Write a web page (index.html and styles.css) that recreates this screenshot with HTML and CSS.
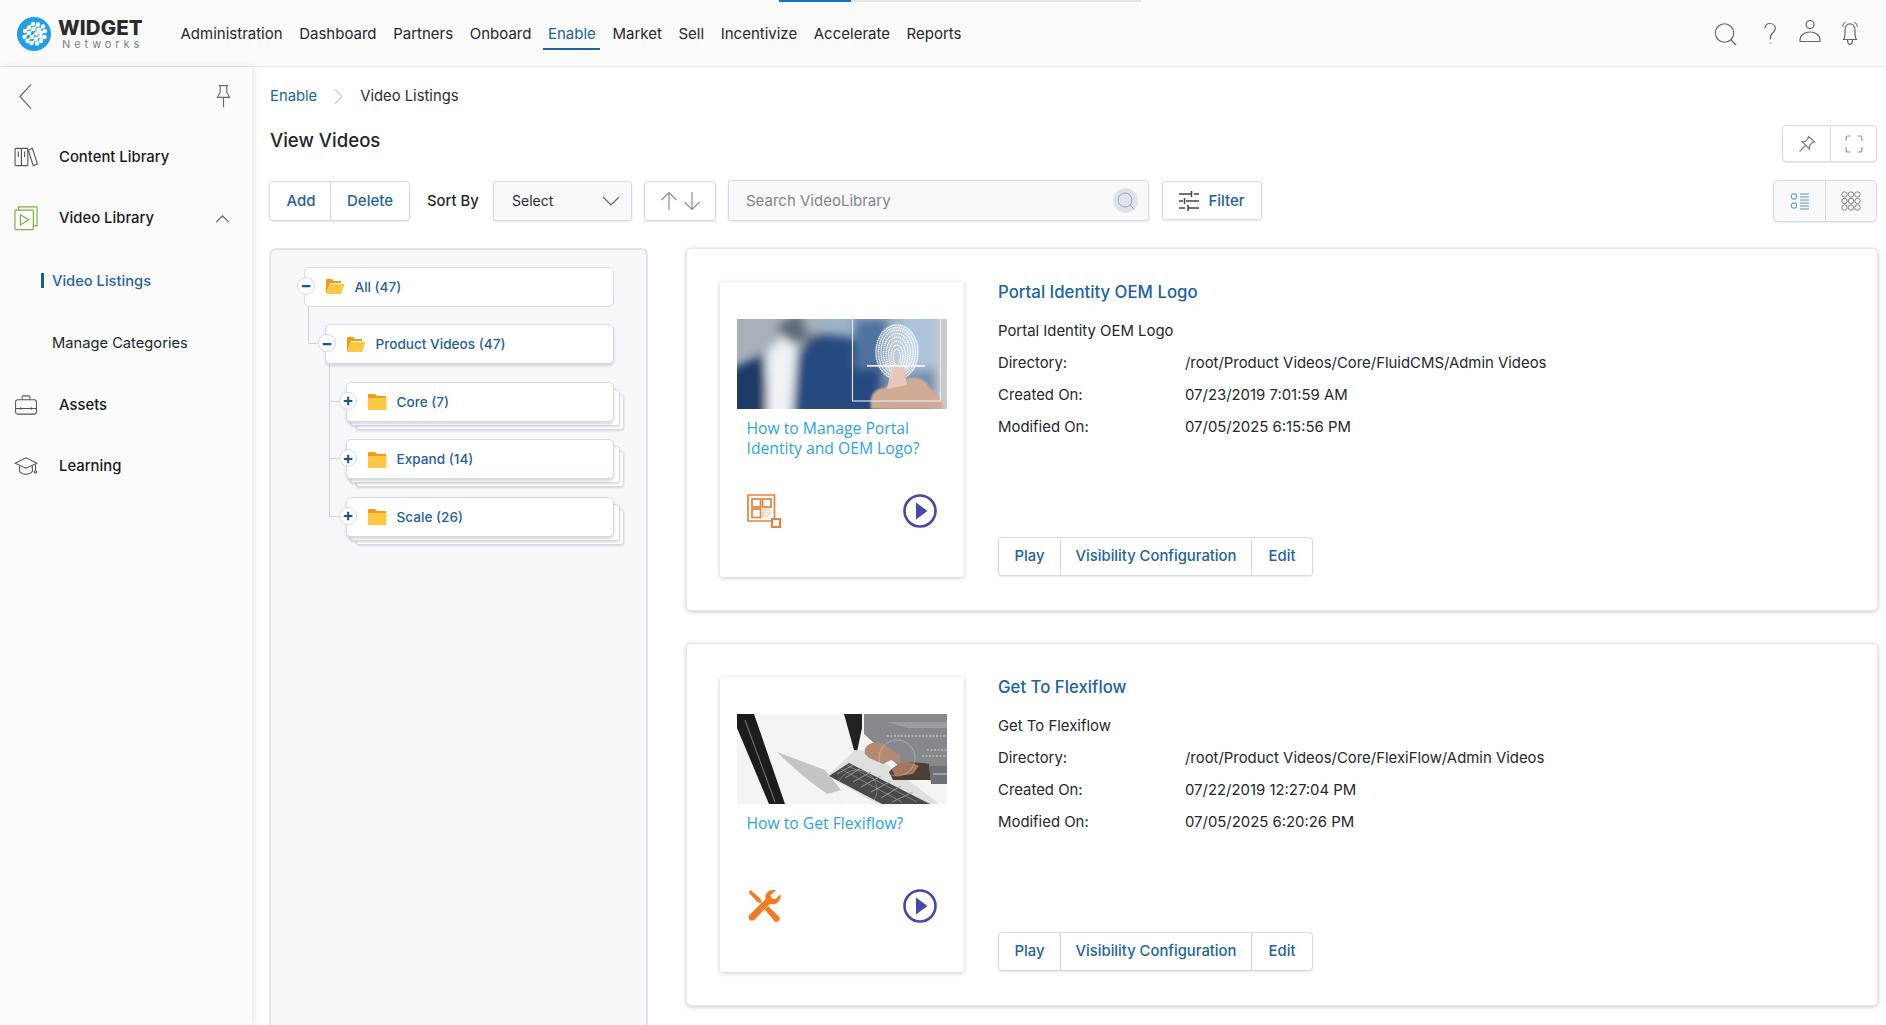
FILE: index.html
```html
<!DOCTYPE html>
<html lang="en">
<head>
<meta charset="utf-8">
<title>View Videos</title>
<link rel="stylesheet" href="styles.css">
</head>
<body>
<div class="progress"><span class="progress-done"></span><span class="progress-rest"></span></div>
<header class="topbar">
  <a class="logo">
    <svg class="logo-mark" viewBox="0 0 34 34" width="34" height="34">
      <circle cx="17" cy="17" r="17" fill="#1f9fe8"/>
      <g stroke="#fff" stroke-width="1.600" stroke-linecap="round" fill="none">
        <path d="M8 14 L15 7.500M7.500 20 L21 7.500M10 24 L26 9.500M14.500 26 L28 14M20 26.500 L27.500 20"/>
      </g>
      <g fill="#fff">
        <circle cx="8" cy="14" r="2.200"/><circle cx="12" cy="10.500" r="2.200"/><circle cx="16" cy="7" r="2.200"/><circle cx="21" cy="7.500" r="2.200"/>
        <circle cx="7.500" cy="20" r="2.200"/><circle cx="12" cy="16" r="2.200"/><circle cx="16.500" cy="12" r="2.200"/><circle cx="21.500" cy="12.500" r="2.200"/><circle cx="26" cy="9.500" r="2.200"/>
        <circle cx="10.500" cy="24" r="2.200"/><circle cx="15" cy="20" r="2.200"/><circle cx="19.500" cy="16.500" r="2.200"/><circle cx="24" cy="15.500" r="2.200"/><circle cx="28" cy="14" r="2.200"/>
        <circle cx="14.500" cy="26" r="2.200"/><circle cx="19" cy="22" r="2.200"/><circle cx="23.500" cy="19.500" r="2.200"/><circle cx="27.500" cy="20" r="2.200"/><circle cx="20" cy="26.500" r="2.200"/><circle cx="24" cy="24" r="2.200"/>
      </g>
    </svg>
    <span class="logo-text"><b class="logo-name">WIDGET</b><span class="logo-sub">Networks</span></span>
  </a>
  <nav class="mainnav">
    <a class="navlink">Administration</a>
    <a class="navlink">Dashboard</a>
    <a class="navlink">Partners</a>
    <a class="navlink">Onboard</a>
    <a class="navlink is-active">Enable</a>
    <a class="navlink">Market</a>
    <a class="navlink">Sell</a>
    <a class="navlink">Incentivize</a>
    <a class="navlink">Accelerate</a>
    <a class="navlink">Reports</a>
  </nav>
  <div class="topicons">
    <svg class="topicon topicon-search" viewBox="0 0 24 30" fill="none" stroke="#62676e" stroke-width="1.100"><circle cx="11.500" cy="15" r="9.200"/><path d="M18 22 L23 27"/></svg>
    <svg class="topicon" viewBox="0 0 24 30" fill="none" stroke="#62676e" stroke-width="1.200"><path d="M7 10.500 C7 7 9.300 5.500 12 5.500 C15 5.500 17.300 7.500 17.300 10.500 C17.300 14.500 12.300 15 12.300 19.500 V21.500"/><path d="M12.300 24 V26" stroke="#b5b8bc"/></svg>
    <svg class="topicon" viewBox="0 0 24 30" fill="none" stroke="#62676e" stroke-width="1.200"><circle cx="12" cy="6.500" r="4"/><path d="M2 23.500 C1.500 17 7 14 12 14 C17 14 22.500 17 22 23.500 Z"/></svg>
    <svg class="topicon" viewBox="0 0 24 30" fill="none" stroke="#62676e" stroke-width="1.200"><path d="M5.500 21.500 C7.500 19 7 15 7 12 C7 8.500 9 5.800 12 5.800 C15 5.800 17 8.500 17 12 C17 15 16.500 19 18.500 21.500 Z"/><path d="M9.500 21.500 C9.500 28 14.500 28 14.500 21.500"/><path d="M4.500 9 C5 6.500 6 5 7.500 4M19.500 9 C19 6.500 18 5 16.500 4" stroke="#85898f"/></svg>
  </div>
</header>

<div class="shell">
  <aside class="sidebar">
    <div class="side-top">
      <svg class="side-back" viewBox="0 0 16 28" fill="none" stroke="#5a5f66" stroke-width="1.200"><path d="M14 1 L2 14 L14 27"/></svg>
      <svg class="side-pin" viewBox="0 0 18 24" fill="none" stroke="#666a70" stroke-width="1.200"><path d="M4 1 H14 M5.500 1 V8 L2.500 13.500 H15.500 L12.500 8 V1 M9 13.500 V24"/></svg>
    </div>
    <a class="side-item">
      <svg class="side-icon" viewBox="0 0 26 22" fill="none" stroke="#50565e" stroke-width="1.200"><rect x="1" y="1.500" width="7" height="19" rx="1"/><rect x="8" y="1.500" width="7" height="19" rx="1"/><path d="M15.500 3.500 L20 1.500 L25.500 18.500 L21 20.500 Z"/><path d="M4.500 5 V11M11.500 5 V11"/></svg>
      <span class="side-label">Content Library</span>
    </a>
    <a class="side-item">
      <svg class="side-icon side-icon-tall" viewBox="0 0 26 27" fill="none" stroke="#7fb23f" stroke-width="1.300"><rect x="1" y="5" width="20" height="21" rx="1"/><path d="M5 5 V1.500 H25 V22 H21"/><path d="M7 10 V21 L16 15.500 Z"/></svg>
      <span class="side-label">Video Library</span>
      <svg class="side-caret" viewBox="0 0 16 10" fill="none" stroke="#5c6168" stroke-width="1.300"><path d="M1 9 L8 2 L15 9"/></svg>
    </a>
    <a class="side-sub is-current"><i class="side-sub-mark"></i>Video Listings</a>
    <a class="side-sub">Manage Categories</a>
    <a class="side-item">
      <svg class="side-icon" viewBox="0 0 26 23" fill="none" stroke="#50565e" stroke-width="1.200"><rect x="1" y="5.500" width="24" height="16.500" rx="2.500"/><path d="M8.500 5.500 V2.500 Q8.500 1 10 1 H16 Q17.500 1 17.500 2.500 V5.500M1 15.500 H25M7 14 V17M19 14 V17"/></svg>
      <span class="side-label">Assets</span>
    </a>
    <a class="side-item">
      <svg class="side-icon" viewBox="0 0 26 22" fill="none" stroke="#50565e" stroke-width="1.200"><path d="M1 8 L13 2 L25 8 L13 13.500 Z"/><path d="M6 11 V17 C9 21 17 21 20 17 V11M23.500 9 V16"/><circle cx="23.500" cy="17.500" r="1.300"/></svg>
      <span class="side-label">Learning</span>
    </a>
  </aside>

  <main class="content">
    <div class="crumbs">
      <a class="crumb-link">Enable</a>
      <svg class="crumb-sep" viewBox="0 0 10 18" fill="none" stroke="#9a9ea4" stroke-width="1"><path d="M1 1 L9 9 L1 17"/></svg>
      <span class="crumb-here">Video Listings</span>
    </div>
    <div class="headrow">
      <h1 class="page-title">View Videos</h1>
      <div class="btn-group btn-group-page">
        <button class="ibtn ibtn-pin"><svg viewBox="0 0 18 18" width="18" height="18" fill="none" stroke="#7c8086" stroke-width="1.200"><path d="M10.500 1.500 L16.500 7 L14.500 7.500 L11.500 10.500 L11.500 14 L4 6.500 L7.500 6.500 L10 3.500 Z"/><path d="M7.500 10.500 L1.500 16.500"/></svg></button>
        <button class="ibtn ibtn-full"><svg viewBox="0 0 18 18" width="18" height="18" fill="none" stroke="#8d9197" stroke-width="1.100"><path d="M1 6 V3 Q1 1 3 1 H5.500M12.500 1 H15 Q17 1 17 3 V6M17 12 V15 Q17 17 15 17 H12.500M5.500 17 H3 Q1 17 1 15 V12"/></svg></button>
      </div>
    </div>
    <div class="toolbar">
      <div class="btn-group">
        <button class="tbtn tbtn-add">Add</button>
        <button class="tbtn tbtn-del">Delete</button>
      </div>
      <span class="sort-label">Sort By</span>
      <div class="select">
        <span>Select</span>
        <svg viewBox="0 0 18 10" width="18" height="10" fill="none" stroke="#5f646b" stroke-width="1.100"><path d="M1 1 L9 9 L17 1"/></svg>
      </div>
      <div class="sortbox">
        <svg viewBox="0 0 18 20" width="18" height="20" fill="none" stroke="#8a8e94" stroke-width="1.200"><path d="M9 19 V1.500M1.500 9 L9 1.500 L16.500 9"/></svg>
        <svg viewBox="0 0 18 20" width="18" height="20" fill="none" stroke="#8a8e94" stroke-width="1.200"><path d="M9 1 V18.500M1.500 11 L9 18.500 L16.500 11"/></svg>
      </div>
      <div class="search">
        <span class="search-text">Search VideoLibrary</span>
        <span class="search-go"><svg viewBox="0 0 20 20" width="20" height="20" fill="none" stroke="#9ba2ab" stroke-width="1"><circle cx="9" cy="9" r="7"/><path d="M14 14 L18.500 18.500"/></svg></span>
      </div>
      <button class="filterbtn">
        <svg viewBox="0 0 20 20" width="20" height="20" fill="none" stroke="#40454c" stroke-width="1.500"><path d="M0 3 H12M15 3 H20M12.500 0 V6M0 10 H4M7 10 H20M5.500 7 V13M0 17 H6M9 17 H20M9 14 V20"/></svg>
        Filter
      </button>
      <div class="btn-group btn-group-view">
        <button class="vbtn"><svg viewBox="0 0 20 20" width="20" height="20" fill="none" stroke="#4f84b2" stroke-width="1"><rect x="1.500" y="3" width="5" height="5" rx="1.500"/><rect x="1.500" y="12" width="5" height="5" rx="1.500"/><path d="M10 3 H19M10 6 H19M10 9 H19M10 12 H19M10 15 H19M10 18 H19" stroke-width=".9"/></svg></button>
        <button class="vbtn vbtn-grid"><svg viewBox="0 0 20 20" width="20" height="20" fill="none" stroke="#7f8489" stroke-width="1"><g><circle cx="3.500" cy="3.500" r="2.700"/><circle cx="10" cy="3.500" r="2.700"/><circle cx="16.500" cy="3.500" r="2.700"/><circle cx="3.500" cy="10" r="2.700"/><circle cx="10" cy="10" r="2.700"/><circle cx="16.500" cy="10" r="2.700"/><circle cx="3.500" cy="16.500" r="2.700"/><circle cx="10" cy="16.500" r="2.700"/><circle cx="16.500" cy="16.500" r="2.700"/></g></svg></button>
      </div>
    </div>

    <div class="columns">
      <section class="treepanel">
        <div class="node">
          <span class="toggle">−</span>
          <svg class="folder" viewBox="0 0 20 17"><path d="M1 16 V2 Q1 1 2 1 H7 L9 3 H16 V5 H5 L1 16Z" fill="#f39c12"/><path d="M1 16 L5 6 H19.500 L16 16 Z" fill="#fdc943"/></svg>
          <span class="node-label">All (47)</span>
        </div>
        <div class="node node-l1">
          <i class="elbow elbow-l1"></i>
          <span class="toggle">−</span>
          <svg class="folder" viewBox="0 0 20 17"><path d="M1 16 V2 Q1 1 2 1 H7 L9 3 H16 V5 H5 L1 16Z" fill="#f39c12"/><path d="M1 16 L5 6 H19.500 L16 16 Z" fill="#fdc943"/></svg>
          <span class="node-label">Product Videos (47)</span>
        </div>
        <div class="node node-l2">
          <i class="elbow elbow-first"></i>
          <i class="layer layer-b"></i><i class="layer layer-a"></i>
          <span class="toggle toggle-plus">+</span>
          <svg class="folder" viewBox="0 0 20 17"><path d="M1 4 V2 Q1 1 2 1 H8 L10 3 H19 V5 H1Z" fill="#f39c12"/><rect x="1" y="5" width="18.500" height="12" fill="#fdc943"/></svg>
          <span class="node-label">Core (7)</span>
        </div>
        <div class="node node-l2">
          <i class="elbow"></i>
          <i class="layer layer-b"></i><i class="layer layer-a"></i>
          <span class="toggle toggle-plus">+</span>
          <svg class="folder" viewBox="0 0 20 17"><path d="M1 4 V2 Q1 1 2 1 H8 L10 3 H19 V5 H1Z" fill="#f39c12"/><rect x="1" y="5" width="18.500" height="12" fill="#fdc943"/></svg>
          <span class="node-label">Expand (14)</span>
        </div>
        <div class="node node-l2">
          <i class="elbow"></i>
          <i class="layer layer-b"></i><i class="layer layer-a"></i>
          <span class="toggle toggle-plus">+</span>
          <svg class="folder" viewBox="0 0 20 17"><path d="M1 4 V2 Q1 1 2 1 H8 L10 3 H19 V5 H1Z" fill="#f39c12"/><rect x="1" y="5" width="18.500" height="12" fill="#fdc943"/></svg>
          <span class="node-label">Scale (26)</span>
        </div>
      </section>

      <section class="listing">
        <article class="video">
          <div class="thumbcard">
            <svg class="photo" viewBox="0 0 210 90" preserveAspectRatio="none">
              <defs>
                <filter id="b1" x="-20%" y="-20%" width="140%" height="140%"><feGaussianBlur stdDeviation="5"/></filter>
                <filter id="b2" x="-20%" y="-20%" width="140%" height="140%"><feGaussianBlur stdDeviation="1.300"/></filter>
                <filter id="b3" x="-5%" y="-5%" width="110%" height="110%"><feGaussianBlur stdDeviation=".45"/></filter>
              </defs>
              <rect width="210" height="90" fill="#9fb2c6"/>
              <g filter="url(#b1)">
                <rect x="-10" y="-10" width="95" height="45" fill="#a7b1ba"/>
                <rect x="165" y="-10" width="36" height="60" fill="#abc3da"/>
                <rect x="200" y="-10" width="20" height="110" fill="#cbcbcb"/>
                <path d="M-10 100 V52 L26 34 L34 100Z" fill="#1f3b69"/>
                <path d="M56 100 L60 34 L78 14 L112 18 L145 30 L150 100Z" fill="#27487f"/>
                <path d="M118 0 H150 V50 H118Z" fill="#4f729f"/>
                <path d="M145 100 V56 L198 50 V100Z" fill="#7390b0"/>
                <path d="M30 100 L30 34 L46 18 L60 30 L54 100Z" fill="#f0f2f5"/>
                <path d="M38 8 L62 -8 L74 20 L54 24Z" fill="#5f6a78"/>
              </g>
              <ellipse cx="160" cy="33" rx="21" ry="28" fill="#fff" opacity=".32" filter="url(#b2)"/>
              <g fill="none" stroke="#fff" stroke-width="1.200" stroke-dasharray="1.500 .6" filter="url(#b3)">
                <ellipse cx="160" cy="33" rx="21" ry="27"/><ellipse cx="160" cy="33" rx="18.500" ry="24.500"/><ellipse cx="160" cy="33" rx="16" ry="22"/><ellipse cx="160" cy="34" rx="13.500" ry="19.500"/><ellipse cx="160" cy="35" rx="11" ry="17"/><ellipse cx="160" cy="36" rx="8.500" ry="14"/><ellipse cx="160" cy="37" rx="6" ry="11"/><ellipse cx="160" cy="38" rx="3.500" ry="8"/>
              </g>
              <path d="M134 90 C132 78 136 70 146 69 C152 68 155 62 156 52 C157 44 166 44 167 52 L170 60 C178 56 188 60 192 68 C198 73 206 80 206 90Z" fill="#cfab96" filter="url(#b2)"/>
              <path d="M150 70 L155 46 L166 46 L170 66Z" fill="#ecccc3" opacity=".85" filter="url(#b3)"/>
              <rect x="115.500" y="-2" width="88" height="84" fill="none" stroke="#e9edf1" stroke-width="1.100"/>
              <rect x="130" y="46" width="58" height="1.600" fill="#fff" filter="url(#b3)"/>
            </svg>
            <a class="thumb-title">How to Manage Portal Identity and OEM Logo?</a>
            <div class="thumb-icons">
              <svg viewBox="0 0 34 34" width="34" height="34" fill="none" stroke="#e8813a" stroke-width="1.700"><path d="M24 27 H1 V1 H27.500 V24"/><rect x="5" y="5" width="8.500" height="8"/><rect x="15.500" y="5" width="8.500" height="8"/><rect x="5" y="15" width="8.500" height="8.500"/><path d="M15 16 H24M15 19 H24M15 22 H22M16 15 V24M19 15 V24M22 15 V22" stroke-width=".9" stroke-dasharray="1.200 1.200" opacity=".7"/><rect x="25" y="25" width="8" height="8" stroke-width="2"/></svg>
              <svg viewBox="0 0 34 34" width="34" height="34"><circle cx="17" cy="17" r="15.500" fill="none" stroke="#4747ad" stroke-width="2.600"/><path d="M13 8.500 L24.500 17 L13 25.500Z" fill="#4747ad"/></svg>
            </div>
          </div>
          <div class="details">
            <h2 class="video-name">Portal Identity OEM Logo</h2>
            <p class="video-desc">Portal Identity OEM Logo</p>
            <div class="meta"><span class="meta-key">Directory:</span><span>/root/Product Videos/Core/FluidCMS/Admin Videos</span></div>
            <div class="meta"><span class="meta-key">Created On:</span><span>07/23/2019 7:01:59 AM</span></div>
            <div class="meta"><span class="meta-key">Modified On:</span><span>07/05/2025 6:15:56 PM</span></div>
            <div class="actions btn-group">
              <button class="abtn">Play</button>
              <button class="abtn abtn-wide">Visibility Configuration</button>
              <button class="abtn">Edit</button>
            </div>
          </div>
        </article>

        <article class="video">
          <div class="thumbcard">
            <svg class="photo" viewBox="0 0 210 90" preserveAspectRatio="none">
              <defs>
                <filter id="b4" x="-5%" y="-5%" width="110%" height="110%"><feGaussianBlur stdDeviation=".45"/></filter>
              </defs>
              <rect width="210" height="90" fill="#f4f4f3"/>
              <g filter="url(#b4)">
                <path d="M0 0 H17 L48 90 H32 L0 14Z" fill="#1d1d1f"/>
                <path d="M8 6 L38 88" stroke="#6a6a6a" stroke-width="1.200"/>
                <path d="M107 0 H125 V14 L120 38 L117 36Z" fill="#222225"/>
                <path d="M127 0 H210 V62 L170 60 L138 30 L127 20Z" fill="#85888d"/>
                <path d="M150 8 H210 V14 H170Z" fill="#999ca1"/>
                <path d="M40 38 L88 56 L104 76 L90 80 C70 66 52 50 40 38Z" fill="#c2c4c6"/>
                <path d="M90 62 L118 36 L134 38 L200 88 V90 H140 Z" fill="#dfdfdd"/>
                <path d="M92 62 L112 49 L193 90 H145Z" fill="#47484b"/>
                <path d="M100 60 L116 51M108 64 L124 54M116 68 L134 58M124 73 L144 62M134 78 L154 67M144 84 L164 72M155 88 L176 78" stroke="#a2a3a6" stroke-width=".9"/>
                <path d="M104 55 L165 88M110 51 L180 88" stroke="#8e8f93" stroke-width=".8"/>
                <path d="M128 40 C126 32 134 27 144 29 L162 40 C164 44 165 48 163 49 L154 46 L146 50 L132 44Z" fill="#b58a72"/>
                <path d="M152 58 C158 50 172 46 192 50 L194 66 L156 66Z" fill="#4b3e39"/>
                <path d="M155 56 C160 48 172 46 182 52 L176 60 L158 62Z" fill="#a97560"/>
                <path d="M192 52 H210 V70 L194 70Z" fill="#6d7176"/>
                <circle cx="160" cy="44" r="18" fill="none" stroke="#dadcde" stroke-width=".6" opacity=".7"/>
                <circle cx="120" cy="76" r="20" fill="none" stroke="#e0e0e0" stroke-width=".6" opacity=".6"/>
                <path d="M150 22 H210M185 42 H210M190 36 H210" stroke="#d8dadc" stroke-width="1.200" stroke-dasharray="2 1.500"/>
                <path d="M196 60 H210" stroke="#e8e8e8" stroke-width=".8"/>
              </g>
            </svg>
            <a class="thumb-title">How to Get Flexiflow?</a>
            <div class="thumb-icons">
              <svg viewBox="0 0 33 33" width="34" height="34" fill="#f27a21"><path d="M1.500 3.500 L3.500 1 L13 9.500 L14.500 14 L10 12.500 Z"/><path d="M32.500 5 L27.500 10 L24 9 L23 6 L28 1.300 C22 -.5 16.500 4 18 10 L2.500 25 C-.5 28 3.500 32.500 7 30 L22 14.500 C28.500 16.500 33.500 11 32.500 5Z"/><path d="M17 20 L20.500 16.500 L31.500 27.500 C33 29.500 29.500 33 27.500 32 Z"/></svg>
              <svg viewBox="0 0 34 34" width="34" height="34"><circle cx="17" cy="17" r="15.500" fill="none" stroke="#4747ad" stroke-width="2.600"/><path d="M13 8.500 L24.500 17 L13 25.500Z" fill="#4747ad"/></svg>
            </div>
          </div>
          <div class="details">
            <h2 class="video-name">Get To Flexiflow</h2>
            <p class="video-desc">Get To Flexiflow</p>
            <div class="meta"><span class="meta-key">Directory:</span><span>/root/Product Videos/Core/FlexiFlow/Admin Videos</span></div>
            <div class="meta"><span class="meta-key">Created On:</span><span>07/22/2019 12:27:04 PM</span></div>
            <div class="meta"><span class="meta-key">Modified On:</span><span>07/05/2025 6:20:26 PM</span></div>
            <div class="actions btn-group">
              <button class="abtn">Play</button>
              <button class="abtn abtn-wide">Visibility Configuration</button>
              <button class="abtn">Edit</button>
            </div>
          </div>
        </article>
      </section>
    </div>
  </main>
</div>
</body>
</html>
```
FILE: styles.css
```css
* { box-sizing: border-box; }
html, body { margin: 0; height: 100%; }
body {
  width: 1886px;
  height: 1025px;
  overflow: hidden;
  display: flex;
  flex-direction: column;
  background: #fff;
  color: #1f2226;
  font: 400 14px/20px Inter, "Liberation Sans", sans-serif;
  position: relative;
}
button { font: inherit; background: none; border: 0; padding: 0; margin: 0; color: inherit; }
svg { display: block; }
h1, h2, p { margin: 0; }

.progress { position: absolute; top: 0; left: 779px; display: flex; height: 2px; z-index: 5; }
.progress-done { width: 72px; background: #0d76c9; }
.progress-rest { width: 290px; background: #e3e4e6; }

/* top bar */
.topbar {
  flex: none;
  height: 67px;
  display: flex;
  align-items: flex-start;
  background: #fafafa;
  border-bottom: 1px solid #e3e6ea;
}
.logo { display: flex; align-items: center; gap: 7px; margin: 17px 0 0 17px; width: 159px; }
.logo-mark { flex: none; }
.logo-text { display: flex; flex-direction: column; }
.logo-name { font-size: 20.5px; line-height: 20px; font-weight: 800; color: #2a2a2c; letter-spacing: .1px; }
.logo-sub { font-size: 11px; line-height: 12px; color: #7c7e82; letter-spacing: 3.9px; margin-left: 4px; }
.mainnav { display: flex; gap: 7.600px; margin-top: 20px; }
.navlink { display: block; height: 30px; line-height: 28px; padding: 0 4.500px; font-size: 15px; color: #24272b; border-bottom: 2px solid transparent; }
.navlink.is-active { color: #1c639f; border-bottom-color: #1c639f; }
.topicons { margin: 18px 24px 0 auto; display: flex; gap: 16px; }
.topicon { width: 24px; height: 30px; }
.topicon-search { margin-right: 5px; }

/* shell */
.shell { flex: 1; min-height: 0; display: flex; }
.sidebar {
  flex: none;
  width: 252px;
  background: #fbfbfb;
  box-shadow: 2px 0 6px rgba(40, 50, 60, .12);
  z-index: 2;
}
.side-top { height: 59px; display: flex; justify-content: space-between; align-items: flex-start; padding: 16px 20px 0 18px; }
.side-back { width: 15px; height: 27px; }
.side-pin { width: 17px; height: 24px; margin-top: 1px; }
.side-item { height: 61.500px; display: flex; align-items: center; padding-left: 14px; font-size: 14.850px; font-weight: 500; color: #17191c; }
.side-icon { width: 24px; height: 20px; flex: none; margin-right: 21px; }
.side-icon-tall { height: 26px; }
.side-caret { width: 15px; height: 9px; margin-left: auto; margin-right: 22px; }
.side-sub { height: 62.500px; display: flex; align-items: center; padding-left: 52px; padding-top: 1px; font-size: 14.700px; color: #23262a; }
.side-sub.is-current { color: #24669f; padding-left: 41px; font-weight: 500; }
.side-sub-mark { width: 3px; height: 15px; background: #1c5c97; margin-right: 8px; }

/* main */
.content { flex: 1; min-width: 0; display: flex; flex-direction: column; padding: 19px 8px 0 17px; overflow: hidden; }
.crumbs { display: flex; align-items: center; height: 20px; padding-left: 1px; font-size: 14.800px; }
.crumb-link { color: #1c639f; }
.crumb-sep { width: 9px; height: 17px; margin: 0 17px 0 17px; }
.crumb-here { color: #2a2d31; }
.headrow { display: flex; justify-content: space-between; align-items: flex-start; margin-top: 19px; height: 37px; padding: 0 1px; }
.page-title { font-size: 18.600px; line-height: 30px; font-weight: 500; color: #24272b; }
.btn-group { display: flex; background: #fff; border: 1px solid #d5dbe4; border-radius: 4px; box-shadow: 0 1px 2px rgba(40, 50, 70, .12); }
.btn-group > button { border-left: 1px solid #d5dbe4; }
.btn-group > button:first-child { border-left: 0; }
.ibtn { display: flex; align-items: center; justify-content: center; height: 35px; }
.ibtn-pin { width: 47px; }
.ibtn-full { width: 46px; }
.toolbar { display: flex; align-items: center; margin-top: 17px; height: 43px; padding-right: 1px; }
.tbtn { height: 38px; color: #1c639f; font-weight: 500; font-size: 15px; }
.tbtn-add { width: 60px; padding-left: 2px; }
.tbtn-del { width: 79px; }
.sort-label { margin: 0 14px 0 17px; font-size: 14.800px; font-weight: 500; color: #25282c; width: 52px; white-space: nowrap; }
.select {
  width: 139px; height: 40px; margin-right: 12px; display: flex; align-items: center; justify-content: space-between;
  padding: 1px 11px 0 18px; background: #f8f9fb; border: 1px solid #d5dbe4; border-radius: 3px;
  box-shadow: 0 1px 2px rgba(40, 50, 70, .12); font-size: 14px; color: #2a2d31;
}
.sortbox {
  width: 72px; height: 40px; margin-right: 12px; display: flex; align-items: center; justify-content: center; gap: 5px;
  background: #fff; border: 1px solid #d5dbe4; border-radius: 3px; box-shadow: 0 1px 2px rgba(40, 50, 70, .12);
}
.search {
  width: 421px; height: 41px; margin-right: 13px; display: flex; align-items: center; justify-content: space-between;
  padding: 0 10px 0 17px; background: #f8f9fb; border: 1px solid #d5dbe4; border-radius: 3px;
  box-shadow: 0 1px 2px rgba(40, 50, 70, .12); font-size: 15px; color: #80858c;
}
.search-go { width: 25px; height: 25px; border-radius: 50%; background: #dfe4eb; display: flex; align-items: center; justify-content: center; }
.filterbtn {
  width: 100px; height: 39px; display: flex; align-items: center; justify-content: center; gap: 9px;
  background: #fff; border: 1px solid #d5dbe4; border-radius: 3px; box-shadow: 0 1px 2px rgba(40, 50, 70, .12);
  color: #1c639f; font-size: 15px; font-weight: 500;
}
.btn-group-view { margin-left: auto; background: #f7f9fc; height: 42px; border-radius: 5px; }
.vbtn { width: 51px; height: 40px; display: flex; align-items: center; justify-content: center; }

/* columns */
.columns { flex: 1; min-height: 0; display: flex; gap: 38px; margin-top: 25.600px; }
.treepanel {
  flex: none; width: 379px; padding: 17px 32px 0 33px; isolation: isolate;
  background: #f6f8fb; border: 2px solid #e1e5ea; border-bottom: 0; border-radius: 7px 7px 0 0;
}
.node {
  position: relative; height: 40px; margin-bottom: 17.500px; display: flex; align-items: center; padding-left: 20px;
  background: #fff; border: 1px solid #d5dbe6; border-radius: 5px; color: #1f5f9c; font-size: 13.600px; font-weight: 500;
}
.node-l1 { margin-left: 21px; box-shadow: 0 2px 3px rgba(60, 75, 100, .2); }
.node-l2 { margin-left: 42px; box-shadow: 0 2px 3px rgba(60, 75, 100, .22); }
.folder { width: 20px; height: 17px; margin-right: 9.500px; flex: none; }
.toggle {
  position: absolute; left: -8px; top: 50%; margin-top: -10px; width: 18px; height: 18px; border: 1px solid #d3dae5; border-radius: 50%;
  background: #fff; display: flex; align-items: center; justify-content: center; color: #14568f; font-size: 17px; font-weight: 700; line-height: 1; z-index: 1;
}
.layer { position: absolute; background: #fff; border: 1px solid #d5dbe6; border-radius: 3px; box-shadow: 0 1px 2px rgba(60, 75, 100, .2); z-index: -1; }
.layer-a { left: 3px; right: -7px; top: 6px; bottom: -5px; }
.layer-b { left: 9px; right: -11px; top: 11px; bottom: -9px; z-index: -2; }
.elbow { position: absolute; left: -18px; top: -39px; width: 10px; height: 58px; border-left: 1px solid #cbd2dd; border-bottom: 1px solid #cbd2dd; z-index: -3; }
.elbow-first { top: -18px; height: 37px; }
.elbow-l1 { left: -18px; top: -19px; width: 11px; height: 38px; }

/* cards */
.listing { flex: 1; min-width: 0; display: flex; flex-direction: column; gap: 32px; }
.video {
  flex: none; height: 363px; padding: 33px 33px; display: flex; gap: 34px;
  background: #fff; border: 1px solid #e4e6e9; border-radius: 5px; box-shadow: 0 1px 4px rgba(30, 40, 55, .25);
}
.thumbcard {
  flex: none; width: 244px; height: 295px; padding: 37px 17px 49px; display: flex; flex-direction: column;
  background: #fff; border-radius: 3px; box-shadow: 0 1px 4px rgba(30, 40, 55, .25);
}
.photo { width: 210px; height: 90px; flex: none; }
.thumb-title { margin-top: 9px; padding: 0 5px 0 9.500px; font: 400 15.700px/20px "Open Sans", sans-serif; color: #29a5e3; }
.thumb-icons { margin-top: auto; padding: 0 10px; display: flex; justify-content: space-between; align-items: center; }
.details { flex: 1; min-width: 0; display: flex; flex-direction: column; }
.video-name { font-size: 16.800px; line-height: 20px; font-weight: 500; color: #1c639f; margin-bottom: 19px; }
.video-desc { color: #25282c; margin-bottom: 12px; font-size: 14.900px; }
.meta { display: flex; color: #25282c; margin-bottom: 12px; font-size: 14.900px; }
.meta-key { width: 187px; flex: none; }
.actions { margin-top: auto; margin-bottom: 1px; align-self: flex-start; height: 39px; }
.abtn { width: 61px; color: #1c639f; font-weight: 500; font-size: 14.800px; }
.abtn-wide { width: 191px; }
```
